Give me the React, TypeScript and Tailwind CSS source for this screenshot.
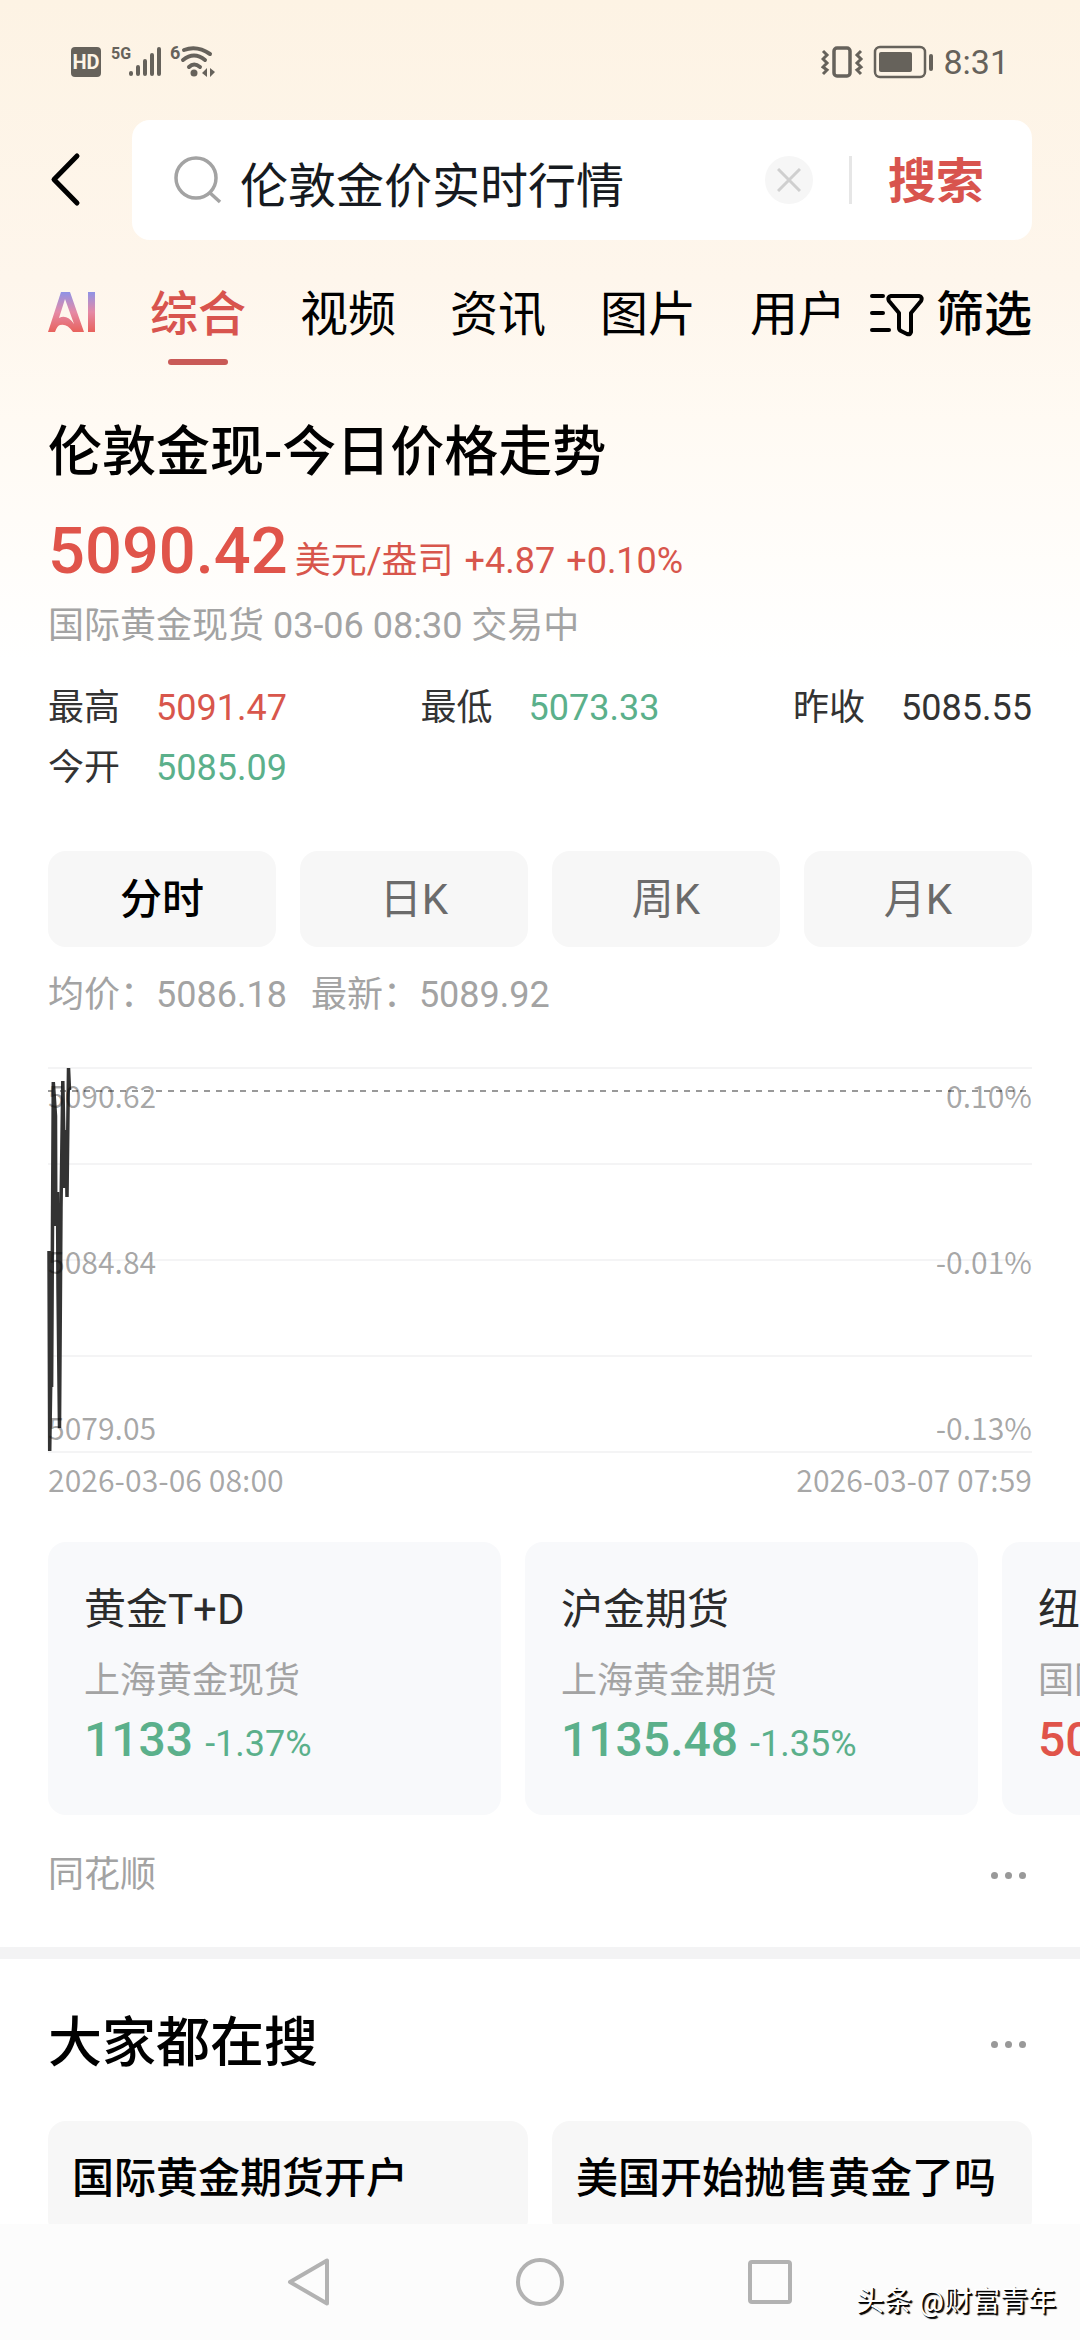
import type { ReactNode } from 'react';

const tabs = ['综合', '视频', '资讯', '图片', '用户'];

const stats = [
  { label: '最高', value: '5091.47', color: 'text-[#d8564c]' },
  { label: '最低', value: '5073.33', color: 'text-[#5bb08b]' },
  { label: '昨收', value: '5085.55', color: 'text-[#333333]' },
  { label: '今开', value: '5085.09', color: 'text-[#5bb08b]' },
];

const periods = ['分时', '日K', '周K', '月K'];

const related = [
  { name: '黄金T+D', market: '上海黄金现货', price: '1133', change: '-1.37%', color: 'text-[#5bb08b]' },
  { name: '沪金期货', market: '上海黄金期货', price: '1135.48', change: '-1.35%', color: 'text-[#5bb08b]' },
  { name: '纽约黄金', market: '国际黄金期货', price: '5098.30', change: '+0.39%', color: 'text-[#e0544a]' },
];

const searches = ['国际黄金期货开户', '美国开始抛售黄金了吗'];

// minute prices, in pixels from the top left corner of the plot
const pricePoints =
  '1,183 1.7,383 4,230 3.6,319 5.3,14 7.5,48 7.8,158 9.5,124 10,220 11.5,360 13,140 14.8,13 16.8,120 18,62 19,129 20.5,0 21.5,22';

const StatusBar = () => (
  <div className="flex h-[120px] items-center justify-between pl-[71px] pr-[71px] pt-1 text-[#66625b]">
    <svg width="146" height="46" viewBox="0 -6 146 46" fill="none" aria-hidden="true">
      <rect x="0" y="2" width="30" height="30" rx="4" fill="currentColor" />
      <text x="15" y="24" textAnchor="middle" fontFamily="Roboto" fontSize="20" fontWeight="700" fill="#fdf4e6">HD</text>
      <text x="40" y="14" fontFamily="Roboto" fontSize="16" fontWeight="700" fill="currentColor">5G</text>
      <g stroke="currentColor" strokeWidth="4" strokeLinecap="round">
        <path d="M60 28v1M67 22v7M74 16v13M81 10v19M88 4v25" />
      </g>
      <text x="99" y="14" fontFamily="Roboto" fontSize="18" fontWeight="700" fill="currentColor">6</text>
      <g stroke="currentColor" strokeWidth="4" strokeLinecap="round">
        <path d="M113 5Q126 0 139 9" />
        <path d="M112 15Q123 6 134 15" />
        <path d="M118 22Q123 17 129 22" />
      </g>
      <circle cx="123" cy="28" r="3.5" fill="currentColor" />
      <path d="M136 23v9l-5-4zM139 23v9l5-5z" fill="currentColor" />
    </svg>
    <div className="flex items-center gap-2">
      <svg width="114" height="34" viewBox="0 0 114 34" fill="none" stroke="currentColor" aria-hidden="true">
        <rect x="13" y="3" width="16" height="28" rx="3" strokeWidth="3.5" />
        <path d="M2 6l4 4-4 4 4 4-4 4 4 3-4 4" strokeWidth="3" />
        <path d="M40 6l-4 4 4 4-4 4 4 4-4 3 4 4" strokeWidth="3" />
        <rect x="54" y="2" width="50" height="30" rx="5" strokeWidth="2.5" />
        <rect x="58" y="7" width="33" height="20" rx="2" fill="currentColor" stroke="none" />
        <path d="M110 11v13" strokeWidth="4" strokeLinecap="round" />
      </svg>
      <span className="text-[34px] leading-10">8:31</span>
    </div>
  </div>
);

const SearchBar = () => (
  <form className="flex h-[120px] items-center px-12" onSubmit={(e) => e.preventDefault()}>
    <button type="button" aria-label="返回" className="w-[84px]">
      <svg width="36" height="60" viewBox="0 0 36 60" fill="none" stroke="#000" strokeWidth="5" strokeLinecap="round" strokeLinejoin="round">
        <path d="M29 6L6 29.5L29 53" />
      </svg>
    </button>
    <div className="flex h-full min-w-0 flex-1 items-center rounded-[18px] bg-white pl-[42px] pr-12">
      <svg width="48" height="48" viewBox="0 0 48 48" fill="none" stroke="#a3a3a3" strokeWidth="3.5" className="shrink-0" aria-hidden="true">
        <circle cx="22" cy="22" r="20" />
        <path d="M35 36L46 46" />
      </svg>
      <input
        aria-label="搜索内容"
        defaultValue="伦敦金价实时行情"
        className="ml-[18px] h-[72px] min-w-0 flex-1 bg-transparent pt-1 text-[48px] leading-[68px] text-[#161a20] outline-none"
      />
      <button type="button" aria-label="清除" className="flex size-12 shrink-0 items-center justify-center rounded-full bg-[#f6f6f6]">
        <svg width="24" height="24" viewBox="0 0 24 24" fill="none" stroke="#cfcfcf" strokeWidth="3">
          <path d="M1 1l22 22M23 1L1 23" />
        </svg>
      </button>
      <span className="ml-9 h-12 w-[3px] shrink-0 bg-[#e6e6e6]" />
      <button type="submit" className="ml-9 shrink-0 pt-1 text-[48px] font-bold leading-[72px] text-[#d8544e]">
        搜索
      </button>
    </div>
  </form>
);

const Tabs = () => (
  <nav className="flex h-[132px] items-start justify-between px-12 pt-[39px]">
    <div className="flex gap-[54px]">
      <a href="#ai" aria-label="AI" className="flex h-[66px] items-center">
        <svg width="48" height="40" viewBox="0 0 48 40" fill="none">
          <defs>
            <linearGradient id="ai" x1="0" y1="0" x2="0" y2="1">
              <stop offset="0" stopColor="#8f93e6" />
              <stop offset="0.5" stopColor="#e58aa6" />
              <stop offset="1" stopColor="#e8625c" />
            </linearGradient>
          </defs>
          <path
            fill="url(#ai)"
            d="M13 0h9l14 40H25Q19 31 12 33Q9 34 7 40H0ZM17 7L11 26Q19 22 26 32ZM40 0h7v40h-7Z"
            fillRule="evenodd"
          />
        </svg>
      </a>
      {tabs.map((tab, i) => (
        <a
          key={tab}
          href={`#${tab}`}
          className={`flex flex-col items-center gap-2 text-[48px] leading-[72px] ${
            i === 0 ? 'font-medium text-[#d8544e]' : 'text-black'
          }`}
        >
          {tab}
          {i === 0 && <span className="h-[6px] w-[60px] rounded-full bg-[#c95a57]" />}
        </a>
      ))}
    </div>
    <button type="button" className="flex items-center gap-3 text-[48px] font-medium leading-[72px] text-black">
      <svg width="54" height="44" viewBox="0 0 54 44" fill="none" stroke="#000" strokeWidth="4" strokeLinecap="round" strokeLinejoin="round" aria-hidden="true">
        <path d="M2 3h11M2 20h11M2 37h17" />
        <path d="M21 3h28Q53 4 51 8L41 20V39Q40 42 37 41L31 38Q29 37 29 35V20L19 8Q17 4 21 3Z" />
      </svg>
      筛选
    </button>
  </nav>
);

const Chart = () => (
  <figure className="mt-[45px]">
    <div className="relative h-[386px] text-[30px] leading-9 text-black/35">
      <svg width="100%" height="386" className="block overflow-visible" fill="none">
        {[1, 97, 193, 289, 385].map((y) => (
          <line key={y} x1="0" x2="100%" y1={y} y2={y} stroke="#f4f4f5" strokeWidth="2" />
        ))}
        <line x1="0" x2="100%" y1="24" y2="24" stroke="#999" strokeWidth="2" strokeDasharray="6 6" />
        <polyline points={pricePoints} stroke="#333" strokeWidth="3.5" strokeLinejoin="bevel" transform="translate(0 1)" />
      </svg>
      <div className="absolute inset-x-0 top-2.5 flex h-[368px] flex-col justify-between font-['Noto_Sans_CJK_SC']">
        <div className="flex justify-between"><span>5090.62</span><span>0.10%</span></div>
        <div className="flex justify-between"><span>5084.84</span><span>-0.01%</span></div>
        <div className="flex justify-between"><span>5079.05</span><span>-0.13%</span></div>
      </div>
    </div>
    <figcaption className="mt-2 flex justify-between font-['Noto_Sans_CJK_SC'] text-[30px] leading-9 text-black/35">
      <span>2026-03-06 08:00</span>
      <span>2026-03-07 07:59</span>
    </figcaption>
  </figure>
);

const MoreButton = () => (
  <button type="button" aria-label="更多" className="flex h-12 items-center gap-[7px] pr-1.5">
    <span className="size-[7px] rounded-full bg-[#999999]" />
    <span className="size-[7px] rounded-full bg-[#999999]" />
    <span className="size-[7px] rounded-full bg-[#999999]" />
  </button>
);

const NavButton = ({ label, children }: { label: string; children: ReactNode }) => (
  <button type="button" aria-label={label}>
    <svg width="52" height="52" viewBox="0 0 52 52" fill="none" stroke="#b2b2b2" strokeWidth="4" strokeLinejoin="round">
      {children}
    </svg>
  </button>
);

export default function App() {
  return (
    <div className="flex h-dvh flex-col overflow-hidden bg-white font-[Roboto,'Noto_Sans_CJK_SC',sans-serif]">
      <main className="min-h-0 flex-1 overflow-hidden bg-[linear-gradient(180deg,#fdf3e4_0px,#fef6ec_280px,#fffaf3_420px,#ffffff_660px)]">
        <StatusBar />
        <SearchBar />
        <Tabs />

        <section className="px-12 pt-[42px]">
          <h1 className="text-[54px] font-medium leading-[78px] text-black">伦敦金现-今日价格走势</h1>
          <div className="mt-5 flex items-baseline gap-[11px] text-[36px] leading-[78px] text-[#d8564c]">
            <p>
              <strong className="mr-[7px] text-[65px] font-medium text-[#e0544a]">5090.42</strong>
              美元/盎司
            </p>
            <span>+4.87</span>
            <span>+0.10%</span>
          </div>
          <p className="text-[36px] leading-[52px] text-[#a3a3a3]">国际黄金现货 03-06 08:30 交易中</p>
          <dl className="mt-[26px] grid grid-cols-[auto_auto_auto] justify-between text-[36px] leading-[60px] text-[#333333]">
            {stats.map((s) => (
              <div key={s.label} className="flex gap-9">
                <dt>{s.label}</dt>
                <dd className={s.color}>{s.value}</dd>
              </div>
            ))}
          </dl>

          <div className="mt-[53px] grid grid-cols-4 gap-6">
            {periods.map((p, i) => (
              <button
                key={p}
                type="button"
                className={`h-24 rounded-[18px] bg-[#f7f7f7] text-[42px] ${
                  i === 0 ? 'font-medium text-black' : 'text-[#6b6b6b]'
                }`}
              >
                {p}
              </button>
            ))}
          </div>
          <p className="mt-[21px] flex gap-6 text-[36px] leading-[54px] text-[#a3a3a3]">
            <span>均价：5086.18</span>
            <span>最新：5089.92</span>
          </p>
          <Chart />
        </section>

        <div className="mt-[45px] flex gap-6 overflow-hidden pl-12">
          {related.map((item) => (
            <a key={item.name} href="#quote" className="w-[453px] shrink-0 rounded-[18px] bg-[#f8f9fb] px-9 pb-[41px] pt-[38px]">
              <h3 className="text-[42px] leading-[60px] text-[#2b2b2b]">{item.name}</h3>
              <p className="mt-3.5 text-[36px] leading-[54px] text-[#a3a3a3]">{item.market}</p>
              <p className={`mt-0.5 flex items-baseline gap-3 text-[36px] leading-[60px] ${item.color}`}>
                <strong className="text-[48px] font-medium">{item.price}</strong>
                <span>{item.change}</span>
              </p>
            </a>
          ))}
        </div>

        <div className="flex h-[132px] items-center justify-between px-12 pb-3">
          <span className="text-[36px] leading-[54px] text-[#a3a3a3]">同花顺</span>
          <MoreButton />
        </div>

        <section className="border-t-12 border-[#f3f3f4] bg-white px-12">
          <div className="flex h-[162px] items-center justify-between pt-2">
            <h2 className="text-[54px] font-medium leading-[78px] text-black">大家都在搜</h2>
            <MoreButton />
          </div>
          <div className="grid grid-cols-2 gap-6">
            {searches.map((s) => (
              <a key={s} href="#search" className="truncate rounded-[18px] bg-[#f7f7f7] px-6 py-7 text-[42px] font-medium leading-[60px] text-black">
                {s}
              </a>
            ))}
          </div>
        </section>
      </main>

      <footer className="relative flex h-[116px] shrink-0 items-center justify-center gap-[178px] bg-[#fcfcfc]">
        <NavButton label="后退">
          <path d="M43 4.5V47.5L6 26Z" />
        </NavButton>
        <NavButton label="主屏幕">
          <circle cx="26" cy="26" r="22" />
        </NavButton>
        <NavButton label="最近任务">
          <rect x="6" y="6" width="40" height="40" rx="2" />
        </NavButton>
        <span className="absolute bottom-5 right-6 text-[28px] leading-9 text-white [text-shadow:1px_1px_0_#000,2px_2px_1px_#000]">
          头条 @财富青年
        </span>
      </footer>
    </div>
  );
}
